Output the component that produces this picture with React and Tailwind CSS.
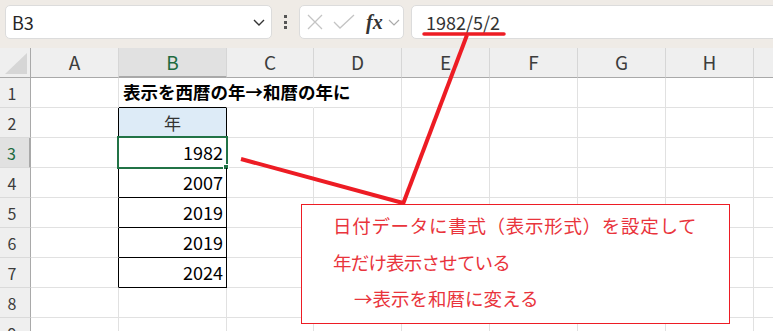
import React from "react";

// ─── sheet data ──────────────────────────────────────────────────────────────
const COLS = ["A", "B", "C", "D", "E", "F", "G", "H"];
const YEARS = { 3: "1982", 4: "2007", 5: "2019", 6: "2019", 7: "2024" };
const FONT = "font-['Noto_Sans_CJK_JP','Liberation_Sans',sans-serif]";

// ─── toolbar ─────────────────────────────────────────────────────────────────
function Toolbar() {
  return (
    <div className="h-[48px] bg-[#efebe6] flex items-start pt-[5px] pl-[5px] overflow-hidden">
      {/* name box */}
      <div className="shrink-0 w-[267px] h-[34px] bg-white rounded-[5px] border border-[#dcdcdc] flex items-center pl-[6px] pr-[5px]">
        <span className="text-[18px] text-[#262626] flex-1">B3</span>
        <svg width="14" height="10" viewBox="0 0 14 10">
          <path d="M2 3 L7 8 L12 3" fill="none" stroke="#333" strokeWidth="1.4" />
        </svg>
      </div>

      {/* kebab */}
      <div className="shrink-0 w-[27px] h-[34px] flex flex-col items-center justify-center gap-[2.5px]">
        <span className="w-[3px] h-[3px] bg-[#555]" />
        <span className="w-[3px] h-[3px] bg-[#555]" />
        <span className="w-[3px] h-[3px] bg-[#555]" />
      </div>

      {/* cancel / enter / fx */}
      <div className="shrink-0 w-[105px] h-[34px] bg-white rounded-[5px] border border-[#dcdcdc] flex items-center pl-[6px]">
        <svg width="18" height="18" viewBox="0 0 18 18">
          <path d="M2 2 L16 16 M16 2 L2 16" stroke="#c4c4c4" strokeWidth="1.3" />
        </svg>
        <svg width="22" height="18" viewBox="0 0 22 18" className="ml-[9px]">
          <path d="M1 9 L7 15 L21 2" fill="none" stroke="#c4c4c4" strokeWidth="1.3" />
        </svg>
        <span className="ml-[11px] font-['Liberation_Serif',serif] italic font-bold text-[20px] text-[#333] leading-none">
          fx
        </span>
        <svg width="14" height="10" viewBox="0 0 14 10" className="ml-[4px]">
          <path d="M2 3 L7 8 L12 3" fill="none" stroke="#aaa" strokeWidth="1.2" />
        </svg>
      </div>

      {/* formula bar */}
      <div className="shrink-0 ml-[7px] w-[380px] h-[34px] bg-white rounded-[5px] border border-[#dcdcdc] flex items-center pl-[14px]">
        <span className="text-[18px] text-[#333]">1982/5/2</span>
      </div>
    </div>
  );
}

// ─── grid ────────────────────────────────────────────────────────────────────
function HeaderRow() {
  return (
    <>
      <div className="h-[30px] bg-[#efefef] border-r border-b border-[#a9a9a9] flex items-end justify-start pl-[5px] pb-[3px]">
        <svg width="22" height="21" viewBox="0 0 22 21">
          <path d="M22 0 L22 21 L0 21 Z" fill="#d6d6d6" />
        </svg>
      </div>
      {COLS.map((c) => (
        <div
          key={c}
          className={`h-[30px] border-r border-b border-r-[#d6d6d6] border-b-[#a9a9a9] flex items-center justify-center text-[19px] ${
            c === "B" ? "bg-[#e1e1e1] text-[#1e6b40] border-b-2 border-b-[#217346]" : "bg-[#efefef] text-[#3c3c3c]"
          }`}
        >
          {c}
        </div>
      ))}
      <div className="h-[30px] bg-[#efefef] border-b border-[#a9a9a9]" />
    </>
  );
}

function Row({ n }) {
  const inBox = n >= 2 && n <= 7;
  const base = "h-[30px] border-r border-b border-[#e1e1e1]";
  return (
    <>
      {/* row header */}
      <div
        className={`h-[30px] border-r border-b border-b-[#dadada] border-r-[#a9a9a9] flex items-center justify-center pr-[6px] text-[16px] ${
          n === 3 ? "bg-[#e1e1e1] text-[#1e6b40] border-r-2 border-r-[#217346]" : "bg-[#efefef] text-[#3c3c3c]"
        }`}
      >
        {n}
      </div>

      {/* A */}
      <div className={`${base} ${inBox ? "border-r-black" : ""}`} />

      {/* B */}
      {n === 1 && (
        <div className={`${base} border-r-transparent border-b-black flex items-center pl-[4px]`}>
          <span className="relative z-10 whitespace-nowrap font-bold text-[17.5px] text-black">
            表示を西暦の年→和暦の年に
          </span>
        </div>
      )}
      {n === 2 && (
        <div className={`${base} border-r-black border-b-black bg-[#ddebf7] flex items-center justify-center text-[17px] text-[#333]`}>
          年
        </div>
      )}
      {n >= 3 && n <= 7 && (
        <div className={`${base} relative border-r-black border-b-black flex items-center justify-end pr-[3px] text-[18px] text-black`}>
          {YEARS[n]}
          {n === 3 && (
            <>
              <div className="absolute -left-[2px] -top-[2px] w-[111px] h-[33px] border-2 border-[#217346]" />
              <div className="absolute left-[104px] top-[26px] w-[6px] h-[6px] bg-[#217346] border border-white" />
            </>
          )}
        </div>
      )}
      {n > 7 && <div className={base} />}

      {/* C .. H */}
      {COLS.slice(2).map((c) => (
        <div key={c} className={`${base} ${n === 1 && c === "C" ? "border-r-transparent" : ""}`} />
      ))}
      <div className="h-[30px] border-b border-[#e1e1e1]" />
    </>
  );
}

// ─── page ────────────────────────────────────────────────────────────────────
export default function App() {
  return (
    <div className={`relative w-[773px] h-[331px] overflow-hidden bg-white ${FONT}`}>
      <Toolbar />

      <div className="grid grid-cols-[31px_88px_108px_87px_88px_88px_88px_88px_88px_19px]">
        <HeaderRow />
        {[1, 2, 3, 4, 5, 6, 7, 8, 9].map((n) => (
          <Row key={n} n={n} />
        ))}
      </div>

      {/* callout */}
      <div className="absolute left-[301px] top-[204px] w-[429px] h-[120px] bg-white border border-[#ed1c24] pt-[2px] pl-[31px] text-[18.5px] leading-[36.5px] text-[#e9343c] whitespace-nowrap">
        <p className="tracking-[0.7px]">日付データに書式（表示形式）を設定して</p>
        <p className="tracking-[-0.8px]">年だけ表示させている</p>
        <p className="pl-[21px]">→表示を和暦に変える</p>
      </div>

      {/* annotation strokes */}
      <svg className="absolute inset-0 pointer-events-none" width="773" height="331">
        <line x1="424" y1="34" x2="504" y2="34" stroke="#ed1c24" strokeWidth="3.5" strokeLinecap="round" />
        <line x1="467" y1="35" x2="403" y2="204" stroke="#ed1c24" strokeWidth="4" />
        <line x1="241" y1="159" x2="403" y2="203" stroke="#ed1c24" strokeWidth="4" />
      </svg>
    </div>
  );
}
